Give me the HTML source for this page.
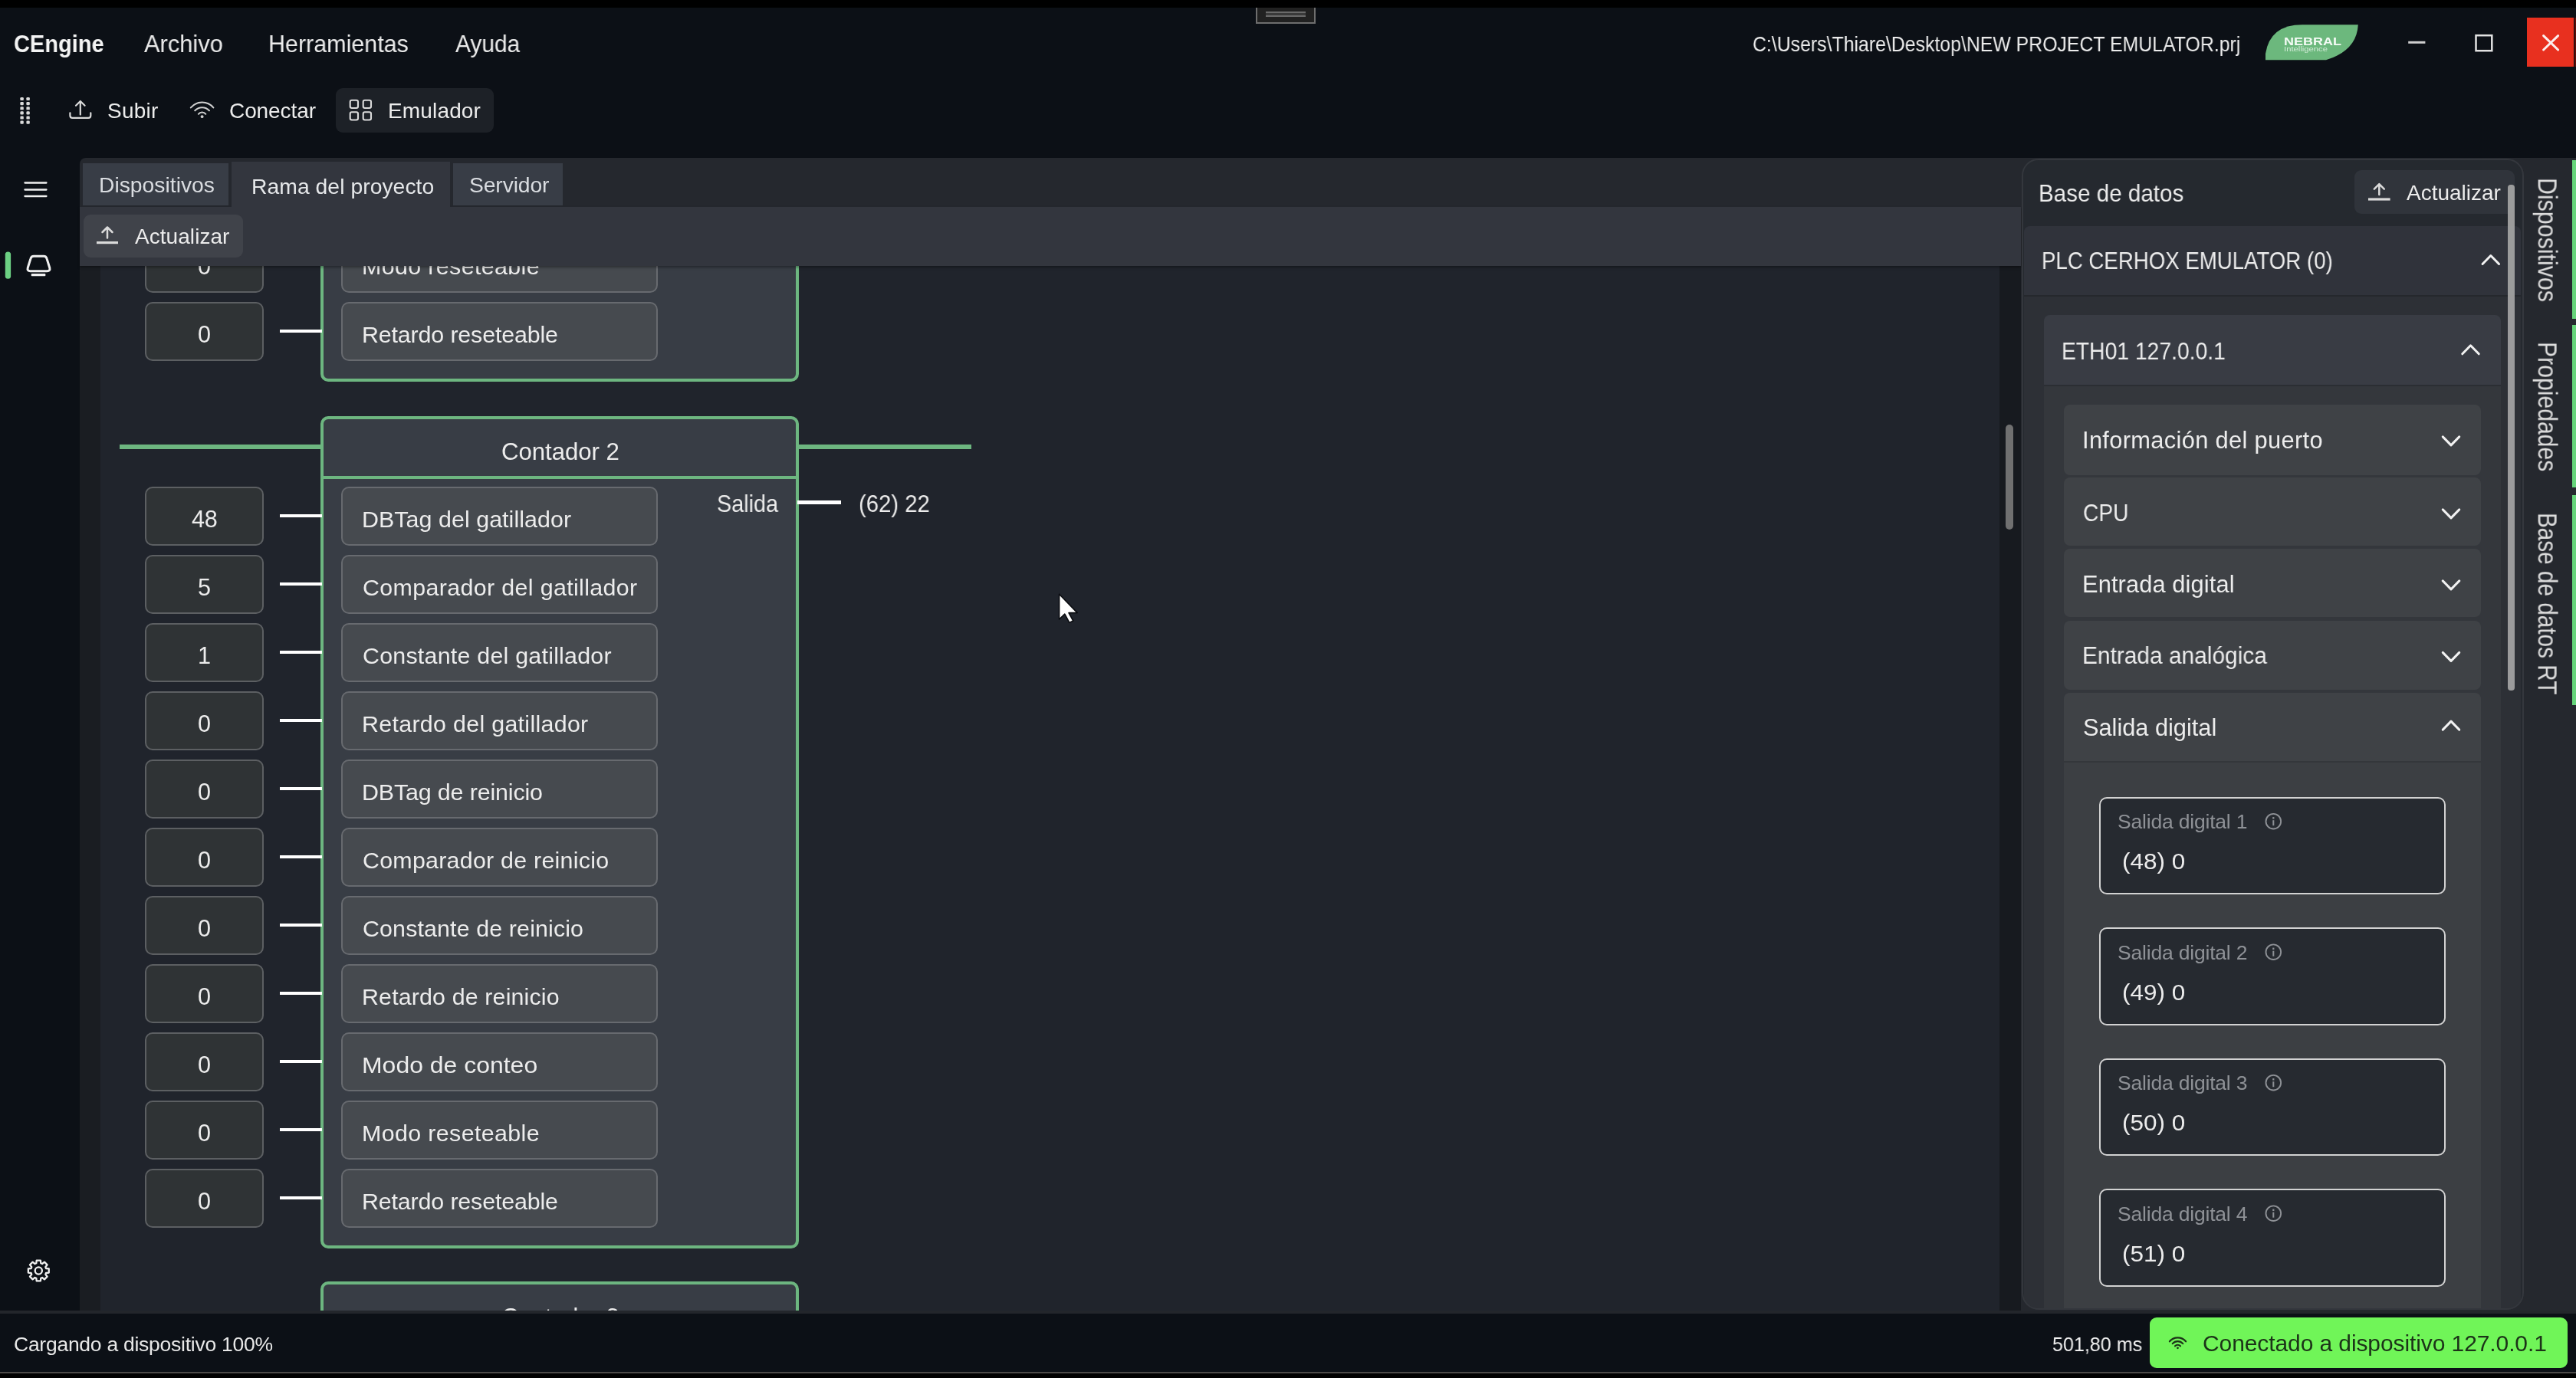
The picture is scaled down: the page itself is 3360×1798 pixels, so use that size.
<!DOCTYPE html>
<html lang="es"><head><meta charset="utf-8"><title>CEngine</title>
<style>
html,body{margin:0;padding:0;background:#0c1016;}
body{width:3360px;height:1798px;position:relative;overflow:hidden;font-family:"Liberation Sans", sans-serif;}
.r{position:absolute;}
.t{position:absolute;white-space:pre;will-change:transform;}
svg.ic{position:absolute;left:0;top:0;}
</style></head><body>
<div class="r" style="left:0.00px;top:0.00px;width:3360.00px;height:10.00px;background:#000;"></div>
<div class="r" style="left:1638.00px;top:10.00px;width:77.50px;height:21.00px;background:#212121;border:2px solid #6e6e6e;border-top:none;box-sizing:border-box;"></div>
<div class="r" style="left:1650.50px;top:15.20px;width:52.50px;height:2.20px;background:#6a6a6a;"></div>
<div class="r" style="left:1650.50px;top:17.40px;width:52.50px;height:2.80px;background:#3a3a3a;"></div>
<div class="r" style="left:1650.50px;top:20.20px;width:52.50px;height:2.20px;background:#6a6a6a;"></div>
<span class="t" style="left:18.09px;top:40.51px;font-size:32px;line-height:32px;color:#f4f4f4;letter-spacing:0.000px;font-weight:700;transform-origin:0 0;transform:scaleX(0.9064);">CEngine</span>
<span class="t" style="left:188.00px;top:40.51px;font-size:32px;line-height:32px;color:#ececec;letter-spacing:0.000px;transform-origin:0 0;transform:scaleX(0.9631);">Archivo</span>
<span class="t" style="left:350.10px;top:40.51px;font-size:32px;line-height:32px;color:#ececec;letter-spacing:0.000px;transform-origin:0 0;transform:scaleX(0.9521);">Herramientas</span>
<span class="t" style="left:593.50px;top:40.51px;font-size:32px;line-height:32px;color:#ececec;letter-spacing:0.000px;transform-origin:0 0;transform:scaleX(0.9352);">Ayuda</span>
<span class="t" style="left:2286.13px;top:42.87px;font-size:28.5px;line-height:28.5px;color:#ececec;letter-spacing:0.000px;transform-origin:0 0;transform:scaleX(0.8715);">C:\Users\Thiare\Desktop\NEW PROJECT EMULATOR.prj</span>
<div class="r" style="left:438.00px;top:115.40px;width:206.40px;height:57.20px;background:#1d2127;border-radius:9px;"></div>
<span class="t" style="left:140.40px;top:131.30px;font-size:28px;line-height:28px;color:#ececec;letter-spacing:0.215px;">Subir</span>
<span class="t" style="left:299.30px;top:131.30px;font-size:28px;line-height:28px;color:#ececec;letter-spacing:-0.084px;">Conectar</span>
<span class="t" style="left:505.80px;top:131.30px;font-size:28px;line-height:28px;color:#ececec;letter-spacing:0.156px;">Emulador</span>
<div class="r" style="left:104.00px;top:206.00px;width:3256.00px;height:1504.00px;background:#25282e;border-radius:8px 0 0 0;"></div>
<div class="r" style="left:104px;top:347px;width:2532px;height:1363px;overflow:hidden;"><div class="r" style="left:-104px;top:-347px;width:3360px;height:1798px"><div class="r" style="left:104.00px;top:347.00px;width:2532.00px;height:1363.00px;background:#1a1d22;"></div>
<div class="r" style="left:131.00px;top:347.00px;width:2477.00px;height:1363.00px;background:#20242c;"></div>
<div class="r" style="left:418.00px;top:-588.00px;width:624.00px;height:1086.00px;background:#383d45;border-radius:10px;border:4px solid #6db680;box-sizing:border-box;"></div>
<div class="r" style="left:422.00px;top:-510.00px;width:616.00px;height:4.00px;background:#6db680;"></div>
<div class="r" style="left:189.00px;top:304.80px;width:155.00px;height:77.00px;background:#2f3335;border-radius:10px;border:2px solid #5c5f62;box-sizing:border-box;"></div>
<div class="r" style="left:365.00px;top:341.30px;width:55.00px;height:4.00px;background:#fff;"></div>
<div class="r" style="left:444.70px;top:304.80px;width:413.70px;height:77.00px;background:#464a4f;border-radius:10px;border:2px solid #676a6f;box-sizing:border-box;"></div>
<span class="t" style="left:258.00px;top:331.80px;font-size:30.6px;line-height:30.6px;color:#ececec;letter-spacing:-0.200px;">0</span>
<span class="t" style="left:472.30px;top:331.97px;font-size:30.4px;line-height:30.4px;color:#ececec;letter-spacing:0.373px;">Modo reseteable</span>
<div class="r" style="left:189.00px;top:393.80px;width:155.00px;height:77.00px;background:#2f3335;border-radius:10px;border:2px solid #5c5f62;box-sizing:border-box;"></div>
<div class="r" style="left:365.00px;top:430.30px;width:55.00px;height:4.00px;background:#fff;"></div>
<div class="r" style="left:444.70px;top:393.80px;width:413.70px;height:77.00px;background:#464a4f;border-radius:10px;border:2px solid #676a6f;box-sizing:border-box;"></div>
<span class="t" style="left:258.00px;top:420.80px;font-size:30.6px;line-height:30.6px;color:#ececec;letter-spacing:-0.200px;">0</span>
<span class="t" style="left:472.30px;top:420.97px;font-size:30.4px;line-height:30.4px;color:#ececec;letter-spacing:-0.146px;">Retardo reseteable</span>
<div class="r" style="left:418.00px;top:543.00px;width:624.00px;height:1086.00px;background:#383d45;border-radius:10px;border:4px solid #6db680;box-sizing:border-box;"></div>
<div class="r" style="left:422.00px;top:621.00px;width:616.00px;height:4.00px;background:#6db680;"></div>
<div class="r" style="left:156.00px;top:579.60px;width:262.00px;height:6.60px;background:#6db680;"></div>
<div class="r" style="left:1042.00px;top:579.60px;width:224.50px;height:6.60px;background:#6db680;"></div>
<span class="t" style="left:654.00px;top:574.29px;font-size:31.2px;line-height:31.2px;color:#ececec;letter-spacing:-0.063px;">Contador 2</span>
<span class="t" style="left:935.09px;top:642.24px;font-size:31.5px;line-height:31.5px;color:#ececec;letter-spacing:0.000px;transform-origin:0 0;transform:scaleX(0.9145);">Salida</span>
<div class="r" style="left:1040.00px;top:652.50px;width:57.00px;height:5.00px;background:#fff;"></div>
<span class="t" style="left:1119.57px;top:642.24px;font-size:31.5px;line-height:31.5px;color:#ececec;letter-spacing:0.000px;transform-origin:0 0;transform:scaleX(0.9302);">(62) 22</span>
<div class="r" style="left:189.00px;top:634.80px;width:155.00px;height:77.00px;background:#2f3335;border-radius:10px;border:2px solid #5c5f62;box-sizing:border-box;"></div>
<div class="r" style="left:365.00px;top:671.30px;width:55.00px;height:4.00px;background:#fff;"></div>
<div class="r" style="left:444.70px;top:634.80px;width:413.70px;height:77.00px;background:#464a4f;border-radius:10px;border:2px solid #676a6f;box-sizing:border-box;"></div>
<span class="t" style="left:250.09px;top:661.80px;font-size:30.6px;line-height:30.6px;color:#ececec;letter-spacing:-0.200px;">48</span>
<span class="t" style="left:472.30px;top:661.97px;font-size:30.4px;line-height:30.4px;color:#ececec;letter-spacing:0.054px;">DBTag del gatillador</span>
<div class="r" style="left:189.00px;top:723.80px;width:155.00px;height:77.00px;background:#2f3335;border-radius:10px;border:2px solid #5c5f62;box-sizing:border-box;"></div>
<div class="r" style="left:365.00px;top:760.30px;width:55.00px;height:4.00px;background:#fff;"></div>
<div class="r" style="left:444.70px;top:723.80px;width:413.70px;height:77.00px;background:#464a4f;border-radius:10px;border:2px solid #676a6f;box-sizing:border-box;"></div>
<span class="t" style="left:258.00px;top:750.80px;font-size:30.6px;line-height:30.6px;color:#ececec;letter-spacing:-0.200px;">5</span>
<span class="t" style="left:473.30px;top:750.97px;font-size:30.4px;line-height:30.4px;color:#ececec;letter-spacing:0.356px;">Comparador del gatillador</span>
<div class="r" style="left:189.00px;top:812.80px;width:155.00px;height:77.00px;background:#2f3335;border-radius:10px;border:2px solid #5c5f62;box-sizing:border-box;"></div>
<div class="r" style="left:365.00px;top:849.30px;width:55.00px;height:4.00px;background:#fff;"></div>
<div class="r" style="left:444.70px;top:812.80px;width:413.70px;height:77.00px;background:#464a4f;border-radius:10px;border:2px solid #676a6f;box-sizing:border-box;"></div>
<span class="t" style="left:257.50px;top:839.80px;font-size:30.6px;line-height:30.6px;color:#ececec;letter-spacing:-0.200px;">1</span>
<span class="t" style="left:473.30px;top:839.97px;font-size:30.4px;line-height:30.4px;color:#ececec;letter-spacing:0.231px;">Constante del gatillador</span>
<div class="r" style="left:189.00px;top:901.80px;width:155.00px;height:77.00px;background:#2f3335;border-radius:10px;border:2px solid #5c5f62;box-sizing:border-box;"></div>
<div class="r" style="left:365.00px;top:938.30px;width:55.00px;height:4.00px;background:#fff;"></div>
<div class="r" style="left:444.70px;top:901.80px;width:413.70px;height:77.00px;background:#464a4f;border-radius:10px;border:2px solid #676a6f;box-sizing:border-box;"></div>
<span class="t" style="left:258.00px;top:928.80px;font-size:30.6px;line-height:30.6px;color:#ececec;letter-spacing:-0.200px;">0</span>
<span class="t" style="left:472.30px;top:928.97px;font-size:30.4px;line-height:30.4px;color:#ececec;letter-spacing:0.301px;">Retardo del gatillador</span>
<div class="r" style="left:189.00px;top:990.80px;width:155.00px;height:77.00px;background:#2f3335;border-radius:10px;border:2px solid #5c5f62;box-sizing:border-box;"></div>
<div class="r" style="left:365.00px;top:1027.30px;width:55.00px;height:4.00px;background:#fff;"></div>
<div class="r" style="left:444.70px;top:990.80px;width:413.70px;height:77.00px;background:#464a4f;border-radius:10px;border:2px solid #676a6f;box-sizing:border-box;"></div>
<span class="t" style="left:258.00px;top:1017.80px;font-size:30.6px;line-height:30.6px;color:#ececec;letter-spacing:-0.200px;">0</span>
<span class="t" style="left:472.30px;top:1017.97px;font-size:30.4px;line-height:30.4px;color:#ececec;letter-spacing:-0.136px;">DBTag de reinicio</span>
<div class="r" style="left:189.00px;top:1079.80px;width:155.00px;height:77.00px;background:#2f3335;border-radius:10px;border:2px solid #5c5f62;box-sizing:border-box;"></div>
<div class="r" style="left:365.00px;top:1116.30px;width:55.00px;height:4.00px;background:#fff;"></div>
<div class="r" style="left:444.70px;top:1079.80px;width:413.70px;height:77.00px;background:#464a4f;border-radius:10px;border:2px solid #676a6f;box-sizing:border-box;"></div>
<span class="t" style="left:258.00px;top:1106.80px;font-size:30.6px;line-height:30.6px;color:#ececec;letter-spacing:-0.200px;">0</span>
<span class="t" style="left:473.30px;top:1106.97px;font-size:30.4px;line-height:30.4px;color:#ececec;letter-spacing:0.249px;">Comparador de reinicio</span>
<div class="r" style="left:189.00px;top:1168.80px;width:155.00px;height:77.00px;background:#2f3335;border-radius:10px;border:2px solid #5c5f62;box-sizing:border-box;"></div>
<div class="r" style="left:365.00px;top:1205.30px;width:55.00px;height:4.00px;background:#fff;"></div>
<div class="r" style="left:444.70px;top:1168.80px;width:413.70px;height:77.00px;background:#464a4f;border-radius:10px;border:2px solid #676a6f;box-sizing:border-box;"></div>
<span class="t" style="left:258.00px;top:1195.80px;font-size:30.6px;line-height:30.6px;color:#ececec;letter-spacing:-0.200px;">0</span>
<span class="t" style="left:473.30px;top:1195.97px;font-size:30.4px;line-height:30.4px;color:#ececec;letter-spacing:0.125px;">Constante de reinicio</span>
<div class="r" style="left:189.00px;top:1257.80px;width:155.00px;height:77.00px;background:#2f3335;border-radius:10px;border:2px solid #5c5f62;box-sizing:border-box;"></div>
<div class="r" style="left:365.00px;top:1294.30px;width:55.00px;height:4.00px;background:#fff;"></div>
<div class="r" style="left:444.70px;top:1257.80px;width:413.70px;height:77.00px;background:#464a4f;border-radius:10px;border:2px solid #676a6f;box-sizing:border-box;"></div>
<span class="t" style="left:258.00px;top:1284.80px;font-size:30.6px;line-height:30.6px;color:#ececec;letter-spacing:-0.200px;">0</span>
<span class="t" style="left:472.30px;top:1284.97px;font-size:30.4px;line-height:30.4px;color:#ececec;letter-spacing:0.140px;">Retardo de reinicio</span>
<div class="r" style="left:189.00px;top:1346.80px;width:155.00px;height:77.00px;background:#2f3335;border-radius:10px;border:2px solid #5c5f62;box-sizing:border-box;"></div>
<div class="r" style="left:365.00px;top:1383.30px;width:55.00px;height:4.00px;background:#fff;"></div>
<div class="r" style="left:444.70px;top:1346.80px;width:413.70px;height:77.00px;background:#464a4f;border-radius:10px;border:2px solid #676a6f;box-sizing:border-box;"></div>
<span class="t" style="left:258.00px;top:1373.80px;font-size:30.6px;line-height:30.6px;color:#ececec;letter-spacing:-0.200px;">0</span>
<span class="t" style="left:472.20px;top:1373.97px;font-size:30.4px;line-height:30.4px;color:#ececec;letter-spacing:0.000px;transform-origin:0 0;transform:scaleX(1.0514);">Modo de conteo</span>
<div class="r" style="left:189.00px;top:1435.80px;width:155.00px;height:77.00px;background:#2f3335;border-radius:10px;border:2px solid #5c5f62;box-sizing:border-box;"></div>
<div class="r" style="left:365.00px;top:1472.30px;width:55.00px;height:4.00px;background:#fff;"></div>
<div class="r" style="left:444.70px;top:1435.80px;width:413.70px;height:77.00px;background:#464a4f;border-radius:10px;border:2px solid #676a6f;box-sizing:border-box;"></div>
<span class="t" style="left:258.00px;top:1462.80px;font-size:30.6px;line-height:30.6px;color:#ececec;letter-spacing:-0.200px;">0</span>
<span class="t" style="left:472.30px;top:1462.97px;font-size:30.4px;line-height:30.4px;color:#ececec;letter-spacing:0.373px;">Modo reseteable</span>
<div class="r" style="left:189.00px;top:1524.80px;width:155.00px;height:77.00px;background:#2f3335;border-radius:10px;border:2px solid #5c5f62;box-sizing:border-box;"></div>
<div class="r" style="left:365.00px;top:1561.30px;width:55.00px;height:4.00px;background:#fff;"></div>
<div class="r" style="left:444.70px;top:1524.80px;width:413.70px;height:77.00px;background:#464a4f;border-radius:10px;border:2px solid #676a6f;box-sizing:border-box;"></div>
<span class="t" style="left:258.00px;top:1551.80px;font-size:30.6px;line-height:30.6px;color:#ececec;letter-spacing:-0.200px;">0</span>
<span class="t" style="left:472.30px;top:1551.97px;font-size:30.4px;line-height:30.4px;color:#ececec;letter-spacing:-0.146px;">Retardo reseteable</span>
<div class="r" style="left:418.00px;top:1672.00px;width:624.00px;height:1086.00px;background:#383d45;border-radius:10px;border:4px solid #6db680;box-sizing:border-box;"></div>
<div class="r" style="left:422.00px;top:1750.00px;width:616.00px;height:4.00px;background:#6db680;"></div>
<span class="t" style="left:654.00px;top:1703.29px;font-size:31.2px;line-height:31.2px;color:#ececec;letter-spacing:-0.063px;">Contador 3</span>
<div class="r" style="left:2608.00px;top:347.00px;width:28.00px;height:1363.00px;background:#171a1f;"></div>
<div class="r" style="left:2616.00px;top:554.00px;width:10.00px;height:137.00px;background:#707070;border-radius:5px;"></div></div></div>
<div class="r" style="left:104.00px;top:270.00px;width:2532.00px;height:76.60px;background:#33363e;box-shadow:0 2px 3px rgba(0,0,0,.35);"></div>
<div class="r" style="left:108.40px;top:213.00px;width:189.60px;height:54.50px;background:#383d46;"></div>
<div class="r" style="left:302.40px;top:210.50px;width:285.00px;height:60.00px;background:#33363e;"></div>
<div class="r" style="left:590.50px;top:213.00px;width:143.50px;height:54.50px;background:#383d46;"></div>
<span class="t" style="left:128.50px;top:227.24px;font-size:28.3px;line-height:28.3px;color:#d9dce0;letter-spacing:-0.001px;">Dispositivos</span>
<span class="t" style="left:327.50px;top:228.54px;font-size:28.3px;line-height:28.3px;color:#e6e8ea;letter-spacing:0.046px;">Rama del proyecto</span>
<span class="t" style="left:612.00px;top:227.24px;font-size:28.3px;line-height:28.3px;color:#d9dce0;letter-spacing:-0.135px;">Servidor</span>
<div class="r" style="left:108.70px;top:279.80px;width:208.20px;height:56.00px;background:#40434a;border-radius:9px;"></div>
<span class="t" style="left:176.30px;top:294.50px;font-size:28px;line-height:28px;color:#ececec;letter-spacing:0.054px;">Actualizar</span>
<div class="r" style="left:2636.5px;top:206.5px;width:655.5px;height:1502.5px;overflow:hidden;border-radius:22px;background:#25292f;"><div class="r" style="left:-2636.5px;top:-206.5px;width:3360px;height:1798px"><span class="t" style="left:2659.31px;top:237.10px;font-size:31.3px;line-height:31.3px;color:#ececec;letter-spacing:0.000px;transform-origin:0 0;transform:scaleX(0.9461);">Base de datos</span>
<div class="r" style="left:3071.00px;top:222.30px;width:208.50px;height:57.00px;background:#30343b;border-radius:9px;"></div>
<span class="t" style="left:3139.00px;top:237.50px;font-size:28px;line-height:28px;color:#ececec;letter-spacing:-0.013px;">Actualizar</span>
<div class="r" style="left:2640.00px;top:295.00px;width:648.00px;height:1500.00px;background:#2d3036;border-radius:8px;"></div>
<div class="r" style="left:2640.00px;top:295.00px;width:648.00px;height:90.00px;background:#30333b;border-radius:8px 8px 0 0;"></div>
<div class="r" style="left:2640.00px;top:385.00px;width:648.00px;height:2.00px;background:#25282d;"></div>
<span class="t" style="left:2663.23px;top:325.39px;font-size:31.2px;line-height:31.2px;color:#ececec;letter-spacing:0.000px;transform-origin:0 0;transform:scaleX(0.8859);">PLC CERHOX EMULATOR (0)</span>
<div class="r" style="left:2666.00px;top:411.00px;width:596.00px;height:1400.00px;background:#34373c;border-radius:8px;"></div>
<div class="r" style="left:2666.00px;top:411.00px;width:596.00px;height:90.50px;background:#393c44;border-radius:8px 8px 0 0;"></div>
<div class="r" style="left:2666.00px;top:501.50px;width:596.00px;height:2.00px;background:#2b2e33;"></div>
<span class="t" style="left:2689.19px;top:442.99px;font-size:31.2px;line-height:31.2px;color:#ececec;letter-spacing:0.000px;transform-origin:0 0;transform:scaleX(0.9069);">ETH01 127.0.0.1</span>
<div class="r" style="left:2692.00px;top:528.00px;width:543.50px;height:91.50px;background:#3f4246;border-radius:8px;"></div>
<span class="t" style="left:2715.80px;top:559.73px;font-size:30.8px;line-height:30.8px;color:#ececec;letter-spacing:0.343px;">Información del puerto</span>
<div class="r" style="left:2692.00px;top:623.00px;width:543.50px;height:89.00px;background:#3f4246;border-radius:8px;"></div>
<span class="t" style="left:2716.89px;top:654.73px;font-size:30.8px;line-height:30.8px;color:#ececec;letter-spacing:0.000px;transform-origin:0 0;transform:scaleX(0.9145);">CPU</span>
<div class="r" style="left:2692.00px;top:716.00px;width:543.50px;height:89.00px;background:#3f4246;border-radius:8px;"></div>
<span class="t" style="left:2715.80px;top:747.73px;font-size:30.8px;line-height:30.8px;color:#ececec;letter-spacing:0.118px;">Entrada digital</span>
<div class="r" style="left:2692.00px;top:809.50px;width:543.50px;height:90.50px;background:#3f4246;border-radius:8px;"></div>
<span class="t" style="left:2715.86px;top:841.23px;font-size:30.8px;line-height:30.8px;color:#ececec;letter-spacing:0.000px;transform-origin:0 0;transform:scaleX(0.9699);">Entrada analógica</span>
<div class="r" style="left:2692.00px;top:903.70px;width:543.50px;height:1000.00px;background:#3c3f43;border-radius:8px;"></div>
<div class="r" style="left:2692.00px;top:903.70px;width:543.50px;height:89.50px;background:#3f4246;border-radius:8px 8px 0 0;"></div>
<div class="r" style="left:2692.00px;top:993.00px;width:543.50px;height:2.00px;background:#34373b;"></div>
<span class="t" style="left:2716.80px;top:934.53px;font-size:30.8px;line-height:30.8px;color:#ececec;letter-spacing:-0.030px;">Salida digital</span>
<div class="r" style="left:2738.00px;top:1039.70px;width:452.30px;height:127.60px;background:#262a30;border-radius:10px;border:2px solid #d2d2d2;box-sizing:border-box;"></div>
<span class="t" style="left:2762.40px;top:1059.27px;font-size:26.5px;line-height:26.5px;color:#8e9196;letter-spacing:-0.195px;">Salida digital 1</span>
<span class="t" style="left:2767.56px;top:1109.04px;font-size:30.2px;line-height:30.2px;color:#ececec;letter-spacing:0.000px;transform-origin:0 0;transform:scaleX(1.0432);">(48) 0</span>
<div class="r" style="left:2738.00px;top:1210.20px;width:452.30px;height:127.60px;background:#262a30;border-radius:10px;border:2px solid #d2d2d2;box-sizing:border-box;"></div>
<span class="t" style="left:2762.40px;top:1229.77px;font-size:26.5px;line-height:26.5px;color:#8e9196;letter-spacing:-0.195px;">Salida digital 2</span>
<span class="t" style="left:2767.56px;top:1279.54px;font-size:30.2px;line-height:30.2px;color:#ececec;letter-spacing:0.000px;transform-origin:0 0;transform:scaleX(1.0432);">(49) 0</span>
<div class="r" style="left:2738.00px;top:1380.70px;width:452.30px;height:127.60px;background:#262a30;border-radius:10px;border:2px solid #d2d2d2;box-sizing:border-box;"></div>
<span class="t" style="left:2762.40px;top:1400.27px;font-size:26.5px;line-height:26.5px;color:#8e9196;letter-spacing:-0.195px;">Salida digital 3</span>
<span class="t" style="left:2767.56px;top:1450.04px;font-size:30.2px;line-height:30.2px;color:#ececec;letter-spacing:0.000px;transform-origin:0 0;transform:scaleX(1.0432);">(50) 0</span>
<div class="r" style="left:2738.00px;top:1551.20px;width:452.30px;height:127.60px;background:#262a30;border-radius:10px;border:2px solid #d2d2d2;box-sizing:border-box;"></div>
<span class="t" style="left:2762.40px;top:1570.77px;font-size:26.5px;line-height:26.5px;color:#8e9196;letter-spacing:-0.195px;">Salida digital 4</span>
<span class="t" style="left:2767.56px;top:1620.54px;font-size:30.2px;line-height:30.2px;color:#ececec;letter-spacing:0.000px;transform-origin:0 0;transform:scaleX(1.0432);">(51) 0</span>
<div class="r" style="left:3271.00px;top:241.00px;width:8.50px;height:660.00px;background:rgba(165,165,165,.92);border-radius:4px;"></div></div></div>
<div class="r" style="left:2636.50px;top:206.50px;width:655.50px;height:1502.50px;border-radius:22px;border:2px solid #34373d;box-sizing:border-box;"></div>
<div class="r" style="left:3355.00px;top:208.80px;width:5.00px;height:206.80px;background:#66d47a;"></div>
<div class="r" style="left:3355.00px;top:424.00px;width:5.00px;height:211.50px;background:#66d47a;"></div>
<div class="r" style="left:3355.00px;top:645.50px;width:5.00px;height:274.00px;background:#66d47a;"></div>
<span class="t" style="left:3310.90px;top:232.07px;font-size:35px;line-height:35px;color:#dcdcdc;letter-spacing:0.000px;transform-origin:0 0;transform:rotate(90deg) translate(0,-29.63px) scaleX(0.8674);">Dispositivos</span>
<span class="t" style="left:3310.90px;top:446.08px;font-size:35px;line-height:35px;color:#dcdcdc;letter-spacing:0.000px;transform-origin:0 0;transform:rotate(90deg) translate(0,-29.63px) scaleX(0.8617);">Propiedades</span>
<span class="t" style="left:3310.90px;top:668.90px;font-size:35px;line-height:35px;color:#dcdcdc;letter-spacing:0.000px;transform-origin:0 0;transform:rotate(90deg) translate(0,-29.63px) scaleX(0.8490);">Base de datos RT</span>
<div class="r" style="left:0.00px;top:1710.00px;width:3360.00px;height:88.00px;background:#0c1016;"></div>
<div class="r" style="left:0.00px;top:1710.00px;width:3360.00px;height:4.00px;background:#23262b;"></div>
<div class="r" style="left:0.00px;top:1790.00px;width:3360.00px;height:2.00px;background:#4c4a48;"></div>
<div class="r" style="left:0.00px;top:1792.00px;width:3360.00px;height:6.00px;background:#000;"></div>
<span class="t" style="left:17.60px;top:1740.57px;font-size:26.5px;line-height:26.5px;color:#e8e8e8;letter-spacing:-0.260px;">Cargando a dispositivo 100%</span>
<span class="t" style="left:2676.75px;top:1740.77px;font-size:26.5px;line-height:26.5px;color:#f0f0f0;letter-spacing:0.000px;transform-origin:0 0;transform:scaleX(0.9470);">501,80 ms</span>
<div class="r" style="left:2804.30px;top:1719.30px;width:545.00px;height:66.00px;background:#70f558;border-radius:9px;"></div>
<span class="t" style="left:2873.20px;top:1737.81px;font-size:30px;line-height:30px;color:#1c3318;letter-spacing:-0.097px;">Conectado a dispositivo 127.0.0.1</span>
<div class="r" style="left:3295.70px;top:23.30px;width:61.80px;height:64.00px;background:#e8301f;"></div>
<div class="r" style="left:3357.50px;top:23.30px;width:2.50px;height:64.00px;background:#5c0d09;"></div>
<svg class="ic" width="3360" height="1798" viewBox="0 0 3360 1798"><rect x="26.4" y="127.00" width="4.4" height="4.1" rx="1.2" fill="#dadada"/>
<rect x="26.4" y="133.12" width="4.4" height="4.1" rx="1.2" fill="#dadada"/>
<rect x="26.4" y="139.24" width="4.4" height="4.1" rx="1.2" fill="#dadada"/>
<rect x="26.4" y="145.36" width="4.4" height="4.1" rx="1.2" fill="#dadada"/>
<rect x="26.4" y="151.48" width="4.4" height="4.1" rx="1.2" fill="#dadada"/>
<rect x="26.4" y="157.60" width="4.4" height="4.1" rx="1.2" fill="#dadada"/>
<rect x="34.4" y="127.00" width="4.4" height="4.1" rx="1.2" fill="#dadada"/>
<rect x="34.4" y="133.12" width="4.4" height="4.1" rx="1.2" fill="#dadada"/>
<rect x="34.4" y="139.24" width="4.4" height="4.1" rx="1.2" fill="#dadada"/>
<rect x="34.4" y="145.36" width="4.4" height="4.1" rx="1.2" fill="#dadada"/>
<rect x="34.4" y="151.48" width="4.4" height="4.1" rx="1.2" fill="#dadada"/>
<rect x="34.4" y="157.60" width="4.4" height="4.1" rx="1.2" fill="#dadada"/>
<g fill="none" stroke="#dadada" stroke-width="2.2" stroke-linecap="round" stroke-linejoin="round"><path d="M91.4 147.3 V150.8 Q91.4 153.9 94.5 153.9 H115.2 Q118.3 153.9 118.3 150.8 V147.3"/><path d="M104.8 149.6 V132.4 M99 137.8 L104.8 132 L110.6 137.8"/></g>
<g fill="none" stroke="#cfcfcf" stroke-width="2.0" stroke-linecap="round"><path d="M248.89 140.46 A19.20 19.20 0 0 1 278.31 140.46"/><path d="M254.24 144.37 A12.60 12.60 0 0 1 272.96 144.37"/><path d="M258.85 148.81 A6.20 6.20 0 0 1 268.35 148.81"/></g><circle cx="263.6" cy="152.20" r="1.90" fill="#cfcfcf"/>
<rect x="456.7" y="130.7" width="10.3" height="10.3" rx="2.2" fill="none" stroke="#dadada" stroke-width="2.1"/>
<rect x="456.7" y="146.2" width="10.3" height="10.3" rx="2.2" fill="none" stroke="#dadada" stroke-width="2.1"/>
<rect x="473.7" y="130.7" width="10.3" height="10.3" rx="2.2" fill="none" stroke="#dadada" stroke-width="2.1"/>
<rect x="473.7" y="146.2" width="10.3" height="10.3" rx="2.2" fill="none" stroke="#dadada" stroke-width="2.1"/>
<g fill="none" stroke="#dadada" stroke-width="2.5" stroke-linecap="round" stroke-linejoin="round"><path d="M140 310.5 V296.8 M133.5 303 L140 296.5 L146.5 303"/></g><rect x="126" y="315.0" width="28" height="3.2" fill="#dadada"/>
<g fill="none" stroke="#dadada" stroke-width="2.5" stroke-linecap="round" stroke-linejoin="round"><path d="M3103.3 254.1 V240.4 M3096.8 246.6 L3103.3 240.1 L3109.8 246.6"/></g><rect x="3089" y="258.4" width="28.59999999999991" height="3.2" fill="#dadada"/>
<rect x="31.3" y="237.35" width="30.3" height="2.3" rx="1.1" fill="#f0f0f0"/>
<rect x="31.3" y="246.35" width="30.3" height="2.3" rx="1.1" fill="#f0f0f0"/>
<rect x="31.3" y="254.85" width="30.3" height="2.3" rx="1.1" fill="#f0f0f0"/>
<rect x="6.8" y="328.6" width="7.3" height="35.2" rx="3.6" fill="#6cd083"/>
<path d="M44 334.3 H57 Q60.2 334.3 61 337.4 L64.8 349.5 Q65.8 353.7 61.5 353.7 H39.5 Q35.2 353.7 36.2 349.5 L40 337.4 Q40.8 334.3 44 334.3 Z" fill="none" stroke="#f0f0f0" stroke-width="3" stroke-linejoin="round"/>
<rect x="40.7" y="357" width="18.7" height="3.2" rx="1" fill="#f0f0f0"/>
<path d="M47.29 1648.26 L47.71 1644.55 L52.89 1644.55 L53.31 1648.26 L55.06 1648.98 L57.98 1646.66 L61.64 1650.32 L59.32 1653.24 L60.04 1654.99 L63.75 1655.41 L63.75 1660.59 L60.04 1661.01 L59.32 1662.76 L61.64 1665.68 L57.98 1669.34 L55.06 1667.02 L53.31 1667.74 L52.89 1671.45 L47.71 1671.45 L47.29 1667.74 L45.54 1667.02 L42.62 1669.34 L38.96 1665.68 L41.28 1662.76 L40.56 1661.01 L36.85 1660.59 L36.85 1655.41 L40.56 1654.99 L41.28 1653.24 L38.96 1650.32 L42.62 1646.66 L45.54 1648.98 Z" fill="none" stroke="#f0f0f0" stroke-width="2.3" stroke-linejoin="round"/><circle cx="50.3" cy="1658" r="4.6" fill="none" stroke="#f0f0f0" stroke-width="2.3"/>
<path d="M3238.05 344.5 L3248.8 333.5 L3259.55 344.5" fill="none" stroke="#f2f2f2" stroke-width="3" stroke-linecap="round" stroke-linejoin="round"/>
<path d="M3211.75 461.8 L3222.5 450.8 L3233.25 461.8" fill="none" stroke="#f2f2f2" stroke-width="3" stroke-linecap="round" stroke-linejoin="round"/>
<path d="M3186.25 569.9 L3197 580.9 L3207.75 569.9" fill="none" stroke="#f2f2f2" stroke-width="3" stroke-linecap="round" stroke-linejoin="round"/>
<path d="M3186.25 664.9 L3197 675.9 L3207.75 664.9" fill="none" stroke="#f2f2f2" stroke-width="3" stroke-linecap="round" stroke-linejoin="round"/>
<path d="M3186.25 757.9 L3197 768.9 L3207.75 757.9" fill="none" stroke="#f2f2f2" stroke-width="3" stroke-linecap="round" stroke-linejoin="round"/>
<path d="M3186.25 851.4 L3197 862.4 L3207.75 851.4" fill="none" stroke="#f2f2f2" stroke-width="3" stroke-linecap="round" stroke-linejoin="round"/>
<path d="M3186.25 952.1 L3197 941.1 L3207.75 952.1" fill="none" stroke="#f2f2f2" stroke-width="3" stroke-linecap="round" stroke-linejoin="round"/>
<circle cx="2965.3" cy="1071.70" r="9.8" fill="none" stroke="#8e9196" stroke-width="1.9"/><rect x="2964.3" y="1070.20" width="2" height="7" fill="#8e9196"/><rect x="2964.2" y="1066.10" width="2.2" height="2.4" fill="#8e9196"/>
<circle cx="2965.3" cy="1242.20" r="9.8" fill="none" stroke="#8e9196" stroke-width="1.9"/><rect x="2964.3" y="1240.70" width="2" height="7" fill="#8e9196"/><rect x="2964.2" y="1236.60" width="2.2" height="2.4" fill="#8e9196"/>
<circle cx="2965.3" cy="1412.70" r="9.8" fill="none" stroke="#8e9196" stroke-width="1.9"/><rect x="2964.3" y="1411.20" width="2" height="7" fill="#8e9196"/><rect x="2964.2" y="1407.10" width="2.2" height="2.4" fill="#8e9196"/>
<circle cx="2965.3" cy="1583.20" r="9.8" fill="none" stroke="#8e9196" stroke-width="1.9"/><rect x="2964.3" y="1581.70" width="2" height="7" fill="#8e9196"/><rect x="2964.2" y="1577.60" width="2.2" height="2.4" fill="#8e9196"/>
<rect x="3141.2" y="53.8" width="22.2" height="3" fill="#cfcfcf"/>
<rect x="3229.5" y="46.2" width="20.8" height="20" fill="none" stroke="#e2e2e2" stroke-width="2.5"/>
<path d="M3317.6 46.6 L3336.6 65 M3336.6 46.6 L3317.6 65" stroke="#fbeeee" stroke-width="3" stroke-linecap="round"/>
<path d="M2955 78.3 V70 Q2961 32.2 3003 32.2 H3075.8 Q3074 66 3034 78.3 Z" fill="#6cb87d"/>
<text x="2979" y="58.6" font-family="Liberation Sans, sans-serif" font-weight="700" font-size="14.6" fill="#f4fbf5" textLength="75" lengthAdjust="spacingAndGlyphs">NEBRAL</text>
<text x="2979" y="67.4" font-family="Liberation Sans, sans-serif" font-size="8.6" fill="#d4ecd9" textLength="57" lengthAdjust="spacingAndGlyphs">Intelligence</text>
<g fill="none" stroke="#1c3318" stroke-width="2.2" stroke-linecap="round"><path d="M2829.91 1750.31 A13.82 13.82 0 0 1 2851.09 1750.31"/><path d="M2833.76 1753.13 A9.07 9.07 0 0 1 2847.24 1753.13"/><path d="M2837.08 1756.33 A4.46 4.46 0 0 1 2843.92 1756.33"/></g><circle cx="2840.5" cy="1758.77" r="1.37" fill="#1c3318"/>
<path d="M1381.6 775.2 L1381.6 808 L1388.8 801.2 L1394.8 812.4 L1399.8 810 L1394 799.6 L1405.2 799.6 Z" fill="#fff" stroke="#0a0c10" stroke-width="1.6" stroke-linejoin="round"/></svg>
</body></html>
